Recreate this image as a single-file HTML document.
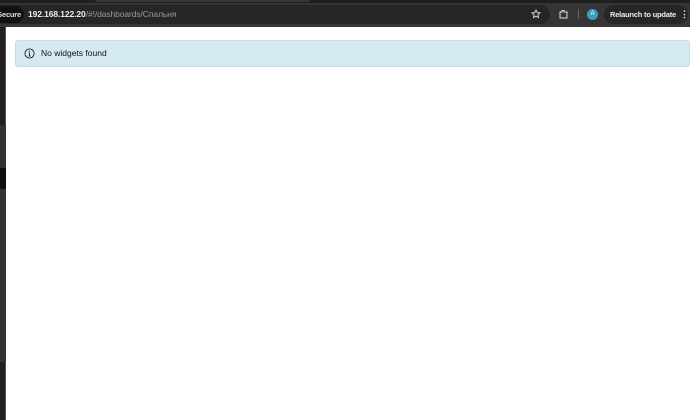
<!DOCTYPE html>
<html><head><meta charset="utf-8"><style>
*{margin:0;padding:0;box-sizing:border-box}
body{width:690px;height:420px;overflow:hidden;background:#fff;font-family:"Liberation Sans",sans-serif;position:relative}
.top{position:absolute;left:0;top:0;width:690px;height:27px;background:#353535}
.tabs{position:absolute;left:0;top:0;width:690px;height:3px;background:#1f1f1f}
.tabs2{position:absolute;left:95px;top:0;width:215px;height:2px;background:#353535;border-radius:0 0 6px 6px}
.omni{position:absolute;left:-10px;top:5px;width:560px;height:19px;background:#262626;border-radius:10px}
.sec{position:absolute;left:-12px;top:6px;height:17px;width:36px;background:#111;border-radius:9px;color:#ddd;font-size:7.5px;font-weight:bold;line-height:17px;text-align:right;padding-right:3px;letter-spacing:-0.2px}
.url{position:absolute;left:28px;top:9px;font-size:8.5px;color:#eee;font-weight:bold;letter-spacing:-0.1px}
.url span{color:#9a9a9a;font-weight:normal}
.relaunch{position:absolute;left:604px;top:5px;width:84px;height:19px;background:#262626;border-radius:10px;color:#eee;font-size:7.5px;font-weight:bold;line-height:19px;padding-left:6px;letter-spacing:-0.2px;white-space:nowrap}
.dots{position:absolute;left:76px;top:0;font-size:9px}
.avatar{position:absolute;left:587px;top:9px;width:11px;height:11px;border-radius:50%;background:#3d9fba;color:#fff;font-size:6px;text-align:center;line-height:11px}
.left{position:absolute;left:0;top:27px;width:6px;height:393px;background:#1f1f1f;border-right:1px solid #555}
.alert{position:absolute;left:15px;top:40px;width:675px;height:27px;background:#d5eaf0;border:1px solid #bfe0e8;border-radius:3px}
.alert .t{position:absolute;left:25px;top:7px;font-size:8.5px;color:#111}
.alert svg{position:absolute;left:8px;top:7px}
</style></head><body>
<div class="top"></div><div class="tabs"></div><div class="tabs2"></div>
<div class="omni"></div>
<div class="sec">Secure</div>
<div class="url">192.168.122.20<span>/#!/dashboards/Спальня</span></div>
<svg style="position:absolute;left:531px;top:9px" width="10" height="10" viewBox="0 0 10 10"><path d="M5 1l1.2 2.6 2.8.3-2.1 1.9.6 2.8L5 7.2 2.5 8.6l.6-2.8L1 3.9l2.8-.3z" fill="none" stroke="#ddd" stroke-width="0.9"/></svg>
<svg style="position:absolute;left:558px;top:9px" width="11" height="11" viewBox="0 0 11 11"><path d="M2 3h2V1.5h2V3h3v6H2z" fill="none" stroke="#ddd" stroke-width="1"/></svg>
<div style="position:absolute;left:578px;top:9px;width:1px;height:10px;background:#666"></div>
<div class="avatar">A</div>
<div class="relaunch">Relaunch to update<span class="dots">⋮</span></div>
<div class="left"></div>
<div style="position:absolute;left:0;top:125px;width:6px;height:43px;background:#333"></div>
<div style="position:absolute;left:0;top:168px;width:6px;height:21px;background:#0f0f0f"></div>
<div style="position:absolute;left:0;top:189px;width:6px;height:173px;background:#333"></div>
<div class="alert"><svg width="11" height="11" viewBox="0 0 11 11"><circle cx="5.5" cy="5.5" r="4.6" fill="none" stroke="#222" stroke-width="0.9"/><path d="M5.5 4.8v3.2M4.6 8h1.8M4.7 4.8h.8" stroke="#222" stroke-width="0.9" fill="none"/><circle cx="5.5" cy="3.2" r="0.6" fill="#222"/></svg><div class="t">No widgets found</div></div>
</body></html>
